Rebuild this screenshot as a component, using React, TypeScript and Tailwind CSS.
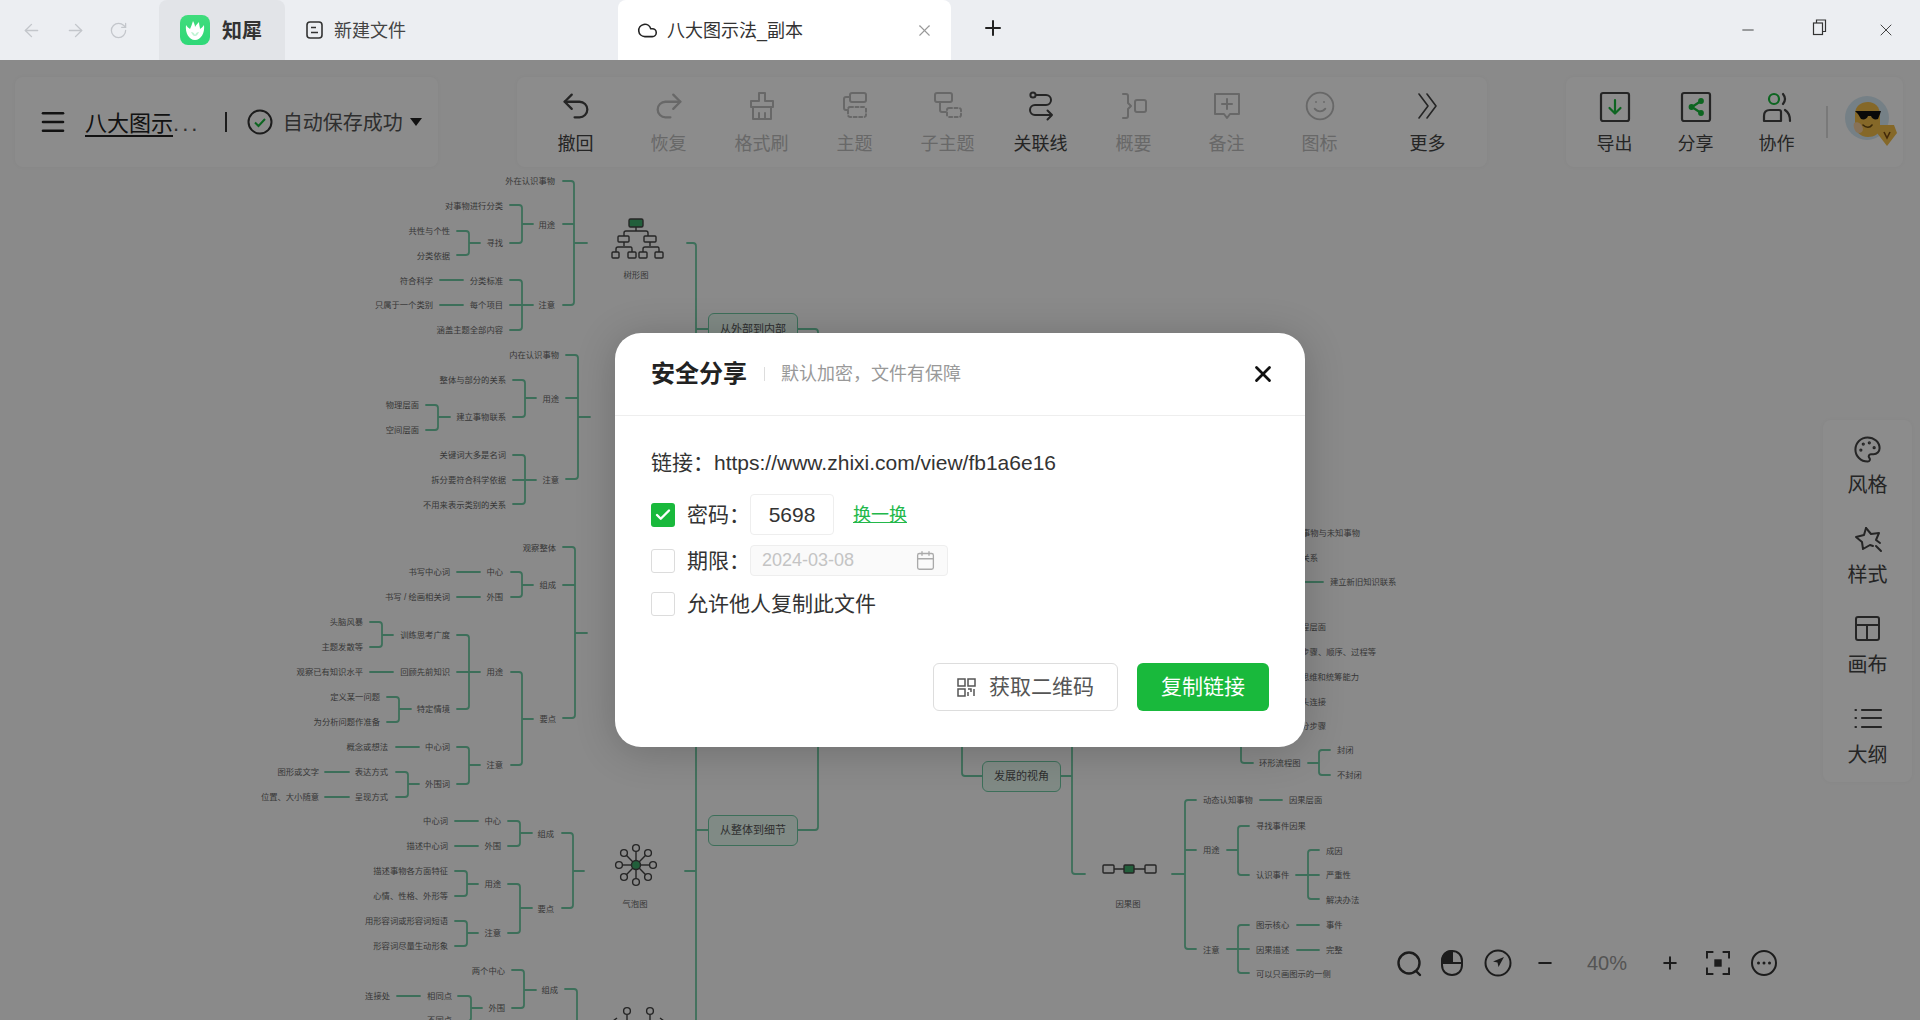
import { ArrowLeft, ArrowRight, RotateCw, Cloud, X, Plus, Minus, Menu, Undo2, Redo2, Smile, Palette, Calendar, Check } from "lucide-react"
import type { ReactNode } from "react"

const GREEN = "#19b93c"
const LINE = "#6fcaa4"

// bracket from child stubs (x0) to vertical (xv), then out to x1
function br(x0: number, xv: number, x1: number, ym: number, ys: number[]) {
  const t = ys[0]
  const b = ys[ys.length - 1]
  const d = x0 > xv ? 3 : -3
  let s = `M${x0} ${t}H${xv + d}Q${xv} ${t} ${xv} ${t + 3}V${b - 3}Q${xv} ${b} ${xv + d} ${b}H${x0}`
  for (const y of ys.slice(1, -1)) s += `M${x0} ${y}H${xv}`
  return s + `M${xv} ${ym}H${x1}`
}
const ln = (a: number, b: number, y: number) => `M${a} ${y}H${b}`

const LINES = [
  // tree group
  br(563, 574, 587, 243, [181, 224, 305]),
  br(510, 522, 533, 224, [205, 243]),
  br(457, 469, 480, 243, [231, 255]),
  br(510, 522, 533, 305, [280, 305, 330]),
  ln(440, 463, 280),
  ln(440, 463, 305),
  // inner group
  br(566, 578, 590, 417, [355, 398, 479]),
  br(513, 525, 536, 398, [380, 417]),
  br(426, 438, 450, 417, [405, 430]),
  br(513, 525, 536, 480, [455, 480, 504]),
  // third group
  br(563, 575, 587, 633, [547, 585, 718]),
  br(511, 522, 533, 585, [572, 597]),
  ln(457, 480, 572),
  ln(457, 480, 597),
  br(511, 522, 533, 719, [672, 765]),
  br(457, 469, 480, 672, [635, 672, 709]),
  br(370, 382, 393, 635, [622, 647]),
  ln(370, 393, 672),
  br(387, 399, 411, 709, [697, 722]),
  br(457, 469, 480, 765, [747, 784]),
  ln(396, 419, 747),
  ln(325, 349, 772),
  ln(325, 349, 797),
  br(396, 408, 419, 784, [772, 797]),
  // bubble group
  br(562, 573, 584, 871, [833, 908]),
  br(508, 520, 532, 833, [821, 846]),
  ln(455, 478, 821),
  ln(455, 478, 846),
  br(508, 520, 532, 908, [884, 933]),
  br(455, 467, 478, 884, [871, 896]),
  br(455, 467, 478, 933, [921, 946]),
  // double bubble group
  br(512, 524, 536, 990, [970, 1008]),
  ln(397, 420, 996),
  br(458, 471, 482, 1008, [996, 1021]),
  "M565 989H574Q577 989 577 992V1020",
  // trunk
  "M687 243H693Q696 243 696 246V1020",
  "M685 871H696M696 329H708M696 830H708",
  "M798 329H815Q818 329 818 332V827Q818 830 815 830H798",
  "M982 776H965Q962 776 962 773V700",
  "M1061 776H1072M1072 700V871Q1072 874 1075 874H1085",
  "M1241 740V760Q1241 763 1244 763H1253",
  ln(1305, 1323, 582),
  // cause group
  br(1196, 1185, 1172, 874, [800, 850, 949]),
  ln(1260, 1282, 800),
  br(1249, 1238, 1227, 850, [826, 875]),
  br(1319, 1308, 1296, 875, [850, 875, 899]),
  br(1249, 1238, 1227, 949, [925, 949, 973]),
  ln(1297, 1319, 925),
  ln(1297, 1319, 950),
  br(1330, 1319, 1308, 763, [750, 775]),
]

type Lab = [number, number, string]
const RIGHT_LABELS: Lab[] = [
  [555, 181, "外在认识事物"], [503, 206, "对事物进行分类"], [555, 225, "用途"], [450, 231, "共性与个性"],
  [503, 243, "寻找"], [450, 256, "分类依据"], [433, 281, "符合科学"], [503, 281, "分类标准"],
  [433, 305, "只属于一个类别"], [503, 305, "每个项目"], [555, 305, "注意"], [503, 330, "涵盖主题全部内容"],
  [559, 355, "内在认识事物"], [506, 380, "整体与部分的关系"], [559, 399, "用途"], [419, 405, "物理层面"],
  [506, 417, "建立事物联系"], [419, 430, "空间层面"], [506, 455, "关键词大多是名词"],
  [506, 480, "拆分要符合科学依据"], [559, 480, "注意"], [506, 505, "不用来表示类别的关系"],
  [556, 548, "观察整体"], [450, 572, "书写中心词"], [503, 572, "中心"], [556, 585, "组成"],
  [450, 597, "书写 / 绘画相关词"], [503, 597, "外围"], [363, 622, "头脑风暴"], [450, 635, "训练思考广度"],
  [363, 647, "主题发散等"], [363, 672, "观察已有知识水平"], [450, 672, "回顾先前知识"], [503, 672, "用途"],
  [380, 697, "定义某一问题"], [450, 709, "特定情境"], [380, 722, "为分析问题作准备"], [556, 719, "要点"],
  [388, 747, "概念或想法"], [450, 747, "中心词"], [503, 765, "注意"], [319, 772, "图形或文字"],
  [388, 772, "表达方式"], [450, 784, "外围词"], [319, 797, "位置、大小随意"], [388, 797, "呈现方式"],
  [448, 821, "中心词"], [501, 821, "中心"], [554, 834, "组成"], [448, 846, "描述中心词"], [501, 846, "外围"],
  [448, 871, "描述事物各方面特征"], [501, 884, "用途"], [448, 896, "心情、性格、外形等"], [554, 909, "要点"],
  [448, 921, "用形容词或形容词短语"], [501, 933, "注意"], [448, 946, "形容词尽量生动形象"],
  [505, 971, "两个中心"], [558, 990, "组成"], [390, 996, "连接处"], [452, 996, "相同点"], [505, 1008, "外围"],
  [452, 1020, "不同点"],
  [1360, 533, "已知事物与未知事物"], [1318, 558, "事物关系"], [1326, 627, "流程层面"],
  [1376, 652, "步骤、顺序、过程等"], [1359, 677, "逻辑思维和统筹能力"], [1326, 702, "箭头连接"], [1326, 726, "分步骤"],
]
const LEFT_LABELS: Lab[] = [
  [1330, 582, "建立新旧知识联系"], [1259, 763, "环形流程图"], [1337, 750, "封闭"], [1337, 775, "不封闭"],
  [1203, 800, "动态认知事物"], [1289, 800, "因果层面"], [1203, 850, "用途"], [1256, 826, "寻找事件因果"],
  [1256, 875, "认识事件"], [1326, 851, "成因"], [1326, 875, "严重性"], [1326, 900, "解决办法"],
  [1203, 950, "注意"], [1256, 925, "图示核心"], [1256, 950, "因果描述"], [1256, 974, "可以只画图示的一侧"],
  [1326, 925, "事件"], [1326, 950, "完整"],
]
const CENTER_LABELS: Lab[] = [[636, 275, "树形图"], [635, 904, "气泡图"], [1128, 904, "因果图"]]
const NODES: [number, number, number, number, string][] = [
  [708, 313, 90, 32, "从外部到内部"],
  [708, 815, 90, 31, "从整体到细节"],
  [982, 761, 79, 31, "发展的视角"],
]

function MapIcons() {
  const sat = [0, 45, 90, 135, 180, 225, 270, 315].map((a) => [Math.cos((a * Math.PI) / 180), Math.sin((a * Math.PI) / 180)])
  return (
    <g fill="none" stroke="#444" strokeWidth="1.4">
      {/* tree */}
      <rect x="629" y="219" width="14" height="8" rx="1.5" fill="#3fae6c" />
      <path d="M636 227v4M624 236v-3q0-2 2-2h20q2 0 2 2v3M624 242v4M650 242v4M616 252v-3q0-2 2-2h13q1 0 1 2v3M643 252v-3q0-2 2-2h13q1 0 1 2v3" />
      <rect x="618" y="236" width="11" height="6" rx="1" />
      <rect x="644" y="236" width="12" height="6" rx="1" />
      <rect x="612" y="252" width="7" height="6" rx="1" />
      <rect x="628" y="252" width="8" height="6" rx="1" />
      <rect x="639" y="252" width="8" height="6" rx="1" />
      <rect x="655" y="252" width="8" height="6" rx="1" />
      {/* bubble */}
      {sat.map(([c, s], i) => (
        <g key={i}>
          <line x1={636 + c * 4} y1={865 + s * 4} x2={636 + c * 14} y2={865 + s * 14} />
          <circle cx={636 + c * 17} cy={865 + s * 17} r="3.4" />
        </g>
      ))}
      <circle cx="636" cy="865" r="4.5" fill="#3fae6c" />
      {/* double bubble, cut off by the window */}
      <circle cx="627" cy="1011" r="3.4" />
      <circle cx="650" cy="1011" r="3.4" />
      <path d="M627 1015v6M650 1015v6M613 1021l4-3M664 1021l-4-3" />
      {/* cause */}
      <rect x="1103" y="865" width="11" height="8" rx="1" />
      <rect x="1124" y="865" width="10" height="8" rx="1" fill="#3fae6c" />
      <rect x="1145" y="865" width="11" height="8" rx="1" />
      <path d="M1114 869h10M1134 869h11" />
    </g>
  )
}

function MindMap() {
  return (
    <div className="absolute inset-0">
      <svg className="absolute inset-0" width="1920" height="960" viewBox="0 60 1920 960" fill="none">
        <path d={LINES.join("")} stroke={LINE} strokeWidth="1.8" strokeLinecap="round" />
        <MapIcons />
      </svg>
      {RIGHT_LABELS.map(([x, y, t]) => (
        <span key={`${x}-${y}-${t}`} className="absolute -translate-x-full -translate-y-1/2 whitespace-nowrap text-[8.3px] leading-none text-[#666]" style={{ left: x, top: y - 60 }}>{t}</span>
      ))}
      {LEFT_LABELS.map(([x, y, t]) => (
        <span key={`${x}-${y}-${t}`} className="absolute -translate-y-1/2 whitespace-nowrap text-[8.3px] leading-none text-[#666]" style={{ left: x, top: y - 60 }}>{t}</span>
      ))}
      {CENTER_LABELS.map(([x, y, t]) => (
        <span key={t} className="absolute -translate-x-1/2 -translate-y-1/2 whitespace-nowrap text-[8.3px] leading-none text-[#666]" style={{ left: x, top: y - 60 }}>{t}</span>
      ))}
      {NODES.map(([x, y, w, h, t]) => (
        <div key={t} className="absolute flex items-center justify-center rounded-md border-[1.5px] border-[#6fcaa4] bg-[#e9fbf2] text-[11px] text-[#555]" style={{ left: x, top: y - 60, width: w, height: h }}>{t}</div>
      ))}
    </div>
  )
}

function Logo() {
  return (
    <div className="flex size-[30px] items-center justify-center rounded-lg bg-gradient-to-b from-[#3fdc7c] to-[#2fd878]">
      <svg width="22" height="22" viewBox="0 0 22 22" fill="white">
        <path d="M2 6c1 2 3 3 4 4 1-2 2-5 3-8 1 2 2 4 2 6 1-2 3-4 4-5 0 3 1 5 1 7 1-1 3-2 4-4 1 8-3 15-9 15S1 14 2 6z" />
        <path d="M7 13c2 0 3 1 4 3 1-2 2-3 4-3-1 2-2 4-4 4s-3-2-4-4z" fill="#bdf3d2" />
      </svg>
    </div>
  )
}

function TitleBar() {
  return (
    <div className="flex h-[60px] shrink-0 bg-[#eceef2]">
      <div className="flex w-[159px] items-center gap-[23px] pl-[21px] text-[#c3c6cb]">
        <ArrowLeft size={21} strokeWidth={1.6} />
        <ArrowRight size={21} strokeWidth={1.6} />
        <RotateCw size={19} strokeWidth={1.6} />
      </div>
      <div className="flex w-[126px] items-center gap-3 rounded-t-lg bg-[#e2e4e8] pl-[21px]">
        <Logo />
        <span className="pt-[2px] text-[20px] font-bold text-[#333]">知犀</span>
      </div>
      <div className="flex w-[333px] items-center gap-[11px] pl-[21px] text-[18px] text-[#444]">
        <svg width="17" height="18" viewBox="0 0 17 18" fill="none" stroke="#333" strokeWidth="1.6">
          <rect x="1" y="1" width="15" height="16" rx="3" />
          <path d="M5 6.5h5M5 11.5h7" />
        </svg>
        <span className="pt-[2px]">新建文件</span>
      </div>
      <div className="flex w-[333px] items-center rounded-t-lg bg-white pl-[19px] pr-[17px] text-[18px] text-[#333]">
        <Cloud size={21} strokeWidth={1.8} className="text-[#222]" />
        <span className="ml-[9px] flex-1 pt-[3px]">八大图示法_副本</span>
        <X size={19} strokeWidth={1.4} className="text-[#999]" />
      </div>
      <div className="flex flex-1 items-center justify-between pl-[30px] pr-[24px]">
        <Plus size={24} strokeWidth={2} className="mt-[-4px] text-[#222]" />
        <div className="flex items-center text-[#333]">
          <Minus size={18} strokeWidth={1.2} />
          <svg className="ml-[54px] mt-[-7px]" width="18" height="18" viewBox="0 0 18 18" fill="none" stroke="#333" strokeWidth="1.2">
            <rect x="2.5" y="5" width="9" height="11.5" />
            <path d="M5.5 5V2h9v11.5h-3" />
          </svg>
          <X className="ml-[47px]" size={20} strokeWidth={1.1} />
        </div>
      </div>
    </div>
  )
}

const I = ({ children, sw = 2 }: { children: ReactNode; sw?: number }) => (
  <svg width="32" height="32" viewBox="0 0 32 32" fill="none" stroke="currentColor" strokeWidth={sw} strokeLinecap="round" strokeLinejoin="round">{children}</svg>
)

const TOOLS: { label: string; on?: boolean; icon: ReactNode }[] = [
  { label: "撤回", on: true, icon: <Undo2 size={34} strokeWidth={1.6} /> },
  { label: "恢复", icon: <Redo2 size={34} strokeWidth={1.6} /> },
  { label: "格式刷", icon: <I><path d="M13 3h6v8h8v6H5v-6h8zM7 17v12h18V17M13 23v6M19 23v6" /></I> },
  { label: "主题", icon: <I><rect x="11" y="3" width="16" height="9" rx="2" /><path d="M11 7H7q-2 0-2 2v9q0 2 2 2h2" /><rect x="9" y="17" width="18" height="10" rx="2" strokeDasharray="3 2.5" /></I> },
  { label: "子主题", icon: <I><rect x="3" y="3" width="17" height="9" rx="2" /><path d="M8 12v8q0 2 2 2h4" /><rect x="15" y="18" width="14" height="9" rx="2" strokeDasharray="3 2.5" /></I> },
  { label: "关联线", on: true, icon: <I><circle cx="8" cy="5" r="2.6" /><path d="M11 5h10a5 5 0 0 1 0 10H10a5 5 0 0 0 0 10h17M22.5 20.5 27 25l-4.500 4.500" /></I> },
  { label: "概要", icon: <I><path d="M5 4h3q2 0 2 2v7l3 3-3 3v7q0 2-2 2H5" /><rect x="17" y="10" width="11" height="12" rx="2" /></I> },
  { label: "备注", icon: <I><path d="M4 4h24v20h-9l-3 4-3-4H4zM16 9v10M11 14h10" /></I> },
  { label: "图标", icon: <Smile size={32} strokeWidth={1.4} /> },
]

function Tool({ label, on, icon }: { label: string; on?: boolean; icon: ReactNode }) {
  return (
    <div className={`flex w-[93px] flex-col items-center ${on ? "text-[#444]" : "text-[#bdbdbd]"}`}>
      <div className="flex h-[36px] items-center">{icon}</div>
      <span className="mt-[8px] text-[18px] leading-[24px]">{label}</span>
    </div>
  )
}

function Avatar() {
  return (
    <svg width="54" height="54" viewBox="0 0 54 54">
      <circle cx="23" cy="23" r="22" fill="#d6e9f4" />
      <path d="M11 19c0-8 6-12 13-12s12 5 12 13v12c0 7-6 10-12 10-8 0-13-6-13-13z" fill="#f2bd4a" />
      <path d="M10 28c4-2 8 1 9 6 0 4-4 5-7 3-2-3-3-6-2-9z" fill="#f6cfa0" />
      <path d="M11 16h26l-1 3-2 5c-3 1-6 0-7-3h-3c-1 3-4 4-7 3l-3-5z" fill="#111" />
      <path d="M19 30c3 3 7 3 9 0" stroke="#6a4a10" strokeWidth="1.6" fill="none" strokeLinecap="round" />
      <path d="M36 30h14l3 8-10 13-10-13z" fill="#f2bd4a" />
      <path d="M40 37l3 6 3-6" stroke="#7a4a10" strokeWidth="1.6" fill="none" />
    </svg>
  )
}

function TopPanels() {
  return (
    <div className="relative flex items-start justify-between pl-[15px] pr-[17px] pt-[17px]">
      <div className="flex h-[90px] w-[423px] items-center rounded-lg bg-white pl-[23px] shadow-[0_0_4px_rgba(0,0,0,0.04)]">
        <Menu size={30} strokeWidth={2.1} className="text-[#222]" />
        <span className="ml-[17px] pt-[2px] text-[22px] text-[#222]"><span className="underline underline-offset-4">八大图示</span><span className="tracking-[3px] text-[#555]">...</span></span>
        <span className="ml-[25px] h-[20px] w-[1.5px] bg-[#333]" />
        <svg className="ml-[20px]" width="26" height="26" viewBox="0 0 26 26" fill="none">
          <circle cx="13" cy="13" r="11.500" stroke="#333" strokeWidth="2" />
          <path d="M8 13.500l3.500 3.500 6.500-7" stroke={GREEN} strokeWidth="2" />
        </svg>
        <span className="ml-[10px] pt-[2px] text-[20px] text-[#555]">自动保存成功</span>
        <span className="ml-[7px] size-0 border-x-[6px] border-t-[8px] border-x-transparent border-t-[#222]" />
      </div>

      <div className="flex h-[90px] w-[970px] items-center rounded-lg bg-white pl-[12px] shadow-[0_0_4px_rgba(0,0,0,0.04)]">
        {TOOLS.map((t) => <Tool key={t.label} {...t} />)}
        <div className="ml-[15px]">
          <Tool label="更多" on icon={<I sw={1.6}><path d="M7 4l9 12-9 12M15 4l9 12-9 12" /></I>} />
        </div>
      </div>

      <div className="flex h-[90px] w-[337px] items-center rounded-lg bg-white pl-[8px] shadow-[0_0_4px_rgba(0,0,0,0.04)]">
        {[
          { label: "导出", icon: <I sw={2.2}><rect x="2" y="2" width="28" height="28" rx="2" /><path d="M16 9v13M10.500 17l5.500 5.500 5.500-5.500" stroke={GREEN} /></I> },
          { label: "分享", icon: <I sw={2.2}><rect x="2" y="2" width="28" height="28" rx="2" /><path d="M21 10l-9 6 9 6" stroke={GREEN} /><circle cx="21" cy="10" r="1.800" stroke={GREEN} fill={GREEN} /><circle cx="11.500" cy="16" r="1.800" stroke={GREEN} fill={GREEN} /><circle cx="21" cy="22" r="1.800" stroke={GREEN} fill={GREEN} /></I> },
          { label: "协作", icon: <I sw={2.2}><circle cx="13" cy="8" r="5" stroke={GREEN} /><path d="M3 30v-5q0-6 6-6h9q2 0 2 2v9zM22 3q4 5 0 10M24 19q5 3 5 11" /></I> },
        ].map((t) => (
          <div key={t.label} className="flex w-[81px] flex-col items-center text-[#444]">
            <div className="flex h-[36px] items-center">{t.icon}</div>
            <span className="mt-[7px] text-[18px] leading-[24px]">{t.label}</span>
          </div>
        ))}
        <span className="ml-[9px] h-[32px] w-[1.5px] bg-[#ddd]" />
        <div className="ml-[16px]"><Avatar /></div>
      </div>
    </div>
  )
}

const SIDE: { label: string; icon: ReactNode }[] = [
  { label: "风格", icon: <Palette size={29} strokeWidth={1.7} /> },
  { label: "样式", icon: <I><path d="M14 5l5 6 8-1-3 7 4 3" /><path d="M14 5l-2 7-8 2 6 5 1 7 7-4 3 1M24 23l5 5" /></I> },
  { label: "画布", icon: <I sw={2}><rect x="4" y="4" width="23" height="23" rx="2" /><path d="M4 12h23M15 12v15" /></I> },
  { label: "大纲", icon: <I sw={2.2}><path d="M10 7h19M10 15h19M10 24h19M3.500 7h.5M3.500 15h.5M3.500 24h.5" /></I> },
]

function SidePanel() {
  return (
    <div className="absolute right-[8px] top-[360px] flex h-[362px] w-[89px] flex-col items-center rounded-lg bg-white pt-[12px] text-[#444] shadow-[0_0_4px_rgba(0,0,0,0.04)]">
      {SIDE.map((s) => (
        <div key={s.label} className="flex h-[90px] shrink-0 flex-col items-center">
          <div className="flex h-[34px] items-center">{s.icon}</div>
          <span className="mt-[4px] text-[20px] leading-[30px]">{s.label}</span>
        </div>
      ))}
    </div>
  )
}

function ZoomBar() {
  return (
    <div className="absolute left-[1394px] top-[888px] flex items-center text-[#333]">
      <svg width="30" height="30" viewBox="0 0 30 30" fill="none" stroke="currentColor" strokeWidth="2.400" strokeLinecap="round">
        <circle cx="15" cy="15" r="10.500" /><path d="M23 24l3 3" />
      </svg>
      <svg className="ml-[15px]" width="26" height="28" viewBox="0 0 26 28" fill="none" stroke="currentColor" strokeWidth="2">
        <path d="M13 2C7 2 3 6 3 12v4c0 6 4 10 10 10s10-4 10-10v-4c0-6-4-10-10-10z" /><path d="M3 14h20M13 2v12" />
        <path d="M13 2C7 2 3 6 3 14h10z" fill="currentColor" />
      </svg>
      <svg className="ml-[19px]" width="28" height="28" viewBox="0 0 28 28" fill="none" stroke="currentColor" strokeWidth="2">
        <circle cx="14" cy="14" r="12.500" /><path d="M20 8l-11 4.500 4.500 1 1 4.500z" fill="currentColor" stroke="none" />
      </svg>
      <Minus size={20} strokeWidth={2.400} className="ml-[23px]" />
      <span className="ml-[18px] w-[68px] text-center text-[20px] text-[#999]">40%</span>
      <Plus size={20} strokeWidth={2.400} className="ml-[19px]" />
      <svg className="ml-[26px]" width="24" height="24" viewBox="0 0 26 26" fill="none" stroke="currentColor" strokeWidth="2.200">
        <path d="M1 8V1h7M18 1h7v7M25 18v7h-7M8 25H1v-7" /><rect x="9" y="9" width="8" height="8" fill="currentColor" stroke="none" />
      </svg>
      <svg className="ml-[21px]" width="26" height="26" viewBox="0 0 26 26" fill="none" stroke="currentColor" strokeWidth="2">
        <circle cx="13" cy="13" r="12" />
        <circle cx="7.500" cy="13" r="1.500" fill="currentColor" stroke="none" /><circle cx="13" cy="13" r="1.500" fill="currentColor" stroke="none" /><circle cx="18.500" cy="13" r="1.500" fill="currentColor" stroke="none" />
      </svg>
    </div>
  )
}

function Checkbox({ checked }: { checked?: boolean }) {
  return checked ? (
    <span className="flex size-6 items-center justify-center rounded-[3px] bg-[#19b93c] text-white"><Check size={18} strokeWidth={3.200} /></span>
  ) : (
    <span className="size-6 rounded-[3px] border border-[#dcdcdc] bg-white" />
  )
}

function ShareDialog() {
  return (
    <div className="absolute inset-0 flex items-center justify-center bg-black/45">
      <div className="flex h-[414px] w-[690px] flex-col rounded-[26px] bg-white shadow-[0_4px_40px_rgba(0,0,0,0.2)]">
        <div className="flex h-[83px] shrink-0 items-center border-b border-[#eee] pl-[36px] pr-[29px]">
          <span className="text-[24px] font-bold text-[#222]">安全分享</span>
          <span className="ml-[17px] h-[14px] w-px bg-[#ddd]" />
          <span className="ml-[16px] flex-1 text-[18px] text-[#999]">默认加密，文件有保障</span>
          <X size={26} strokeWidth={2.600} className="text-[#111]" />
        </div>
        <div className="flex flex-1 flex-col pl-[36px] pr-[36px] pt-[32px] text-[21px] text-[#333]">
          <div className="flex h-[30px] items-center">
            <span>链接：</span>
            <span>https://www.zhixi.com/view/fb1a6e16</span>
          </div>
          <div className="mt-[16px] flex h-[41px] items-center">
            <Checkbox checked />
            <span className="ml-[12px] w-[63px]">密码：</span>
            <div className="flex h-[41px] w-[84px] items-center justify-center rounded border border-[#eee]">5698</div>
            <a className="ml-[19px] pt-[1px] text-[18px] text-[#22b84a] underline">换一换</a>
          </div>
          <div className="mt-[10px] flex h-[31px] items-center">
            <Checkbox />
            <span className="ml-[12px] w-[63px]">期限：</span>
            <div className="flex h-[31px] w-[198px] items-center justify-between rounded border border-[#eee] bg-[#fafafa] pl-[11px] pr-[11px] text-[18px] text-[#c4c4c4]">
              2024-03-08
              <Calendar size={21} strokeWidth={1.500} className="text-[#aaa]" />
            </div>
          </div>
          <div className="mt-[16px] flex h-[24px] items-center">
            <Checkbox />
            <span className="ml-[12px]">允许他人复制此文件</span>
          </div>
          <div className="mt-[47px] flex justify-end gap-[19px]">
            <button className="flex h-[48px] w-[185px] items-center justify-center gap-[13px] rounded-md border border-[#ddd] bg-white text-[#555]">
              <svg width="19" height="19" viewBox="0 0 19 19" fill="none" stroke="#555" strokeWidth="1.500">
                <rect x="1" y="1" width="7" height="7" /><rect x="11" y="1" width="7" height="7" /><rect x="1" y="11" width="7" height="7" />
                <path d="M11 11h3v3M11 14v4M17 11v7" />
              </svg>
              获取二维码
            </button>
            <button className="flex h-[48px] w-[132px] items-center justify-center rounded-md bg-[#19b93c] text-white">复制链接</button>
          </div>
        </div>
      </div>
    </div>
  )
}

export default function App() {
  return (
    <div className="flex h-[1020px] w-[1920px] flex-col overflow-hidden font-['Liberation_Sans','Noto_Sans_CJK_SC',sans-serif]">
      <TitleBar />
      <div className="relative flex-1 overflow-hidden bg-[#fbfbfb]">
        <MindMap />
        <TopPanels />
        <SidePanel />
        <ZoomBar />
        <ShareDialog />
      </div>
    </div>
  )
}
